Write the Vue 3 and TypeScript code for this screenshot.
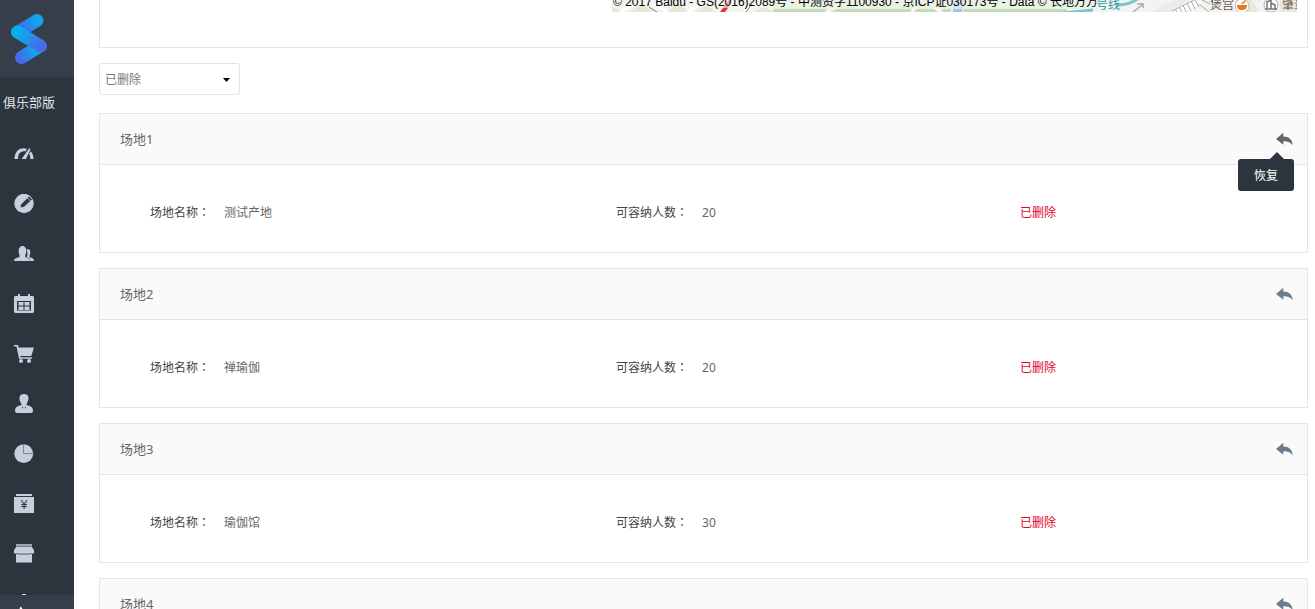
<script setup lang="ts">
import { ref } from 'vue'

interface Venue {
  id: number
  title: string
  name: string
  capacity: number
}

const status = ref('deleted')
const hovered = ref(1)

const venues: Venue[] = [
  { id: 1, title: '场地1', name: '测试产地', capacity: 20 },
  { id: 2, title: '场地2', name: '禅瑜伽', capacity: 20 },
  { id: 3, title: '场地3', name: '瑜伽馆', capacity: 30 },
  { id: 4, title: '场地4', name: '操房', capacity: 30 },
]
</script>

<template>
  <div class="app">
    <aside class="sidebar">
      <div class="logo">
        <svg width="38" height="52" viewBox="0 0 38 52" aria-hidden="true">
          <defs>
            <linearGradient id="bar-top" gradientUnits="userSpaceOnUse" x1="27" y1="7" x2="9" y2="18">
              <stop offset="0" stop-color="#12a4f0" />
              <stop offset="1" stop-color="#4568e6" />
            </linearGradient>
            <linearGradient id="bar-mid" gradientUnits="userSpaceOnUse" x1="5" y1="18" x2="32" y2="34">
              <stop offset="0.1" stop-color="#08aff0" />
              <stop offset="1" stop-color="#4a68e6" />
            </linearGradient>
            <linearGradient id="bar-low" gradientUnits="userSpaceOnUse" x1="25" y1="34" x2="9" y2="45">
              <stop offset="0" stop-color="#06b0f0" />
              <stop offset="1" stop-color="#4569e8" />
            </linearGradient>
          </defs>
          <g fill="none" stroke-width="13" stroke-linecap="round">
            <path d="M27 7.500 8 19" stroke="url(#bar-top)" />
            <path d="M30 33 11.500 44.500" stroke="url(#bar-low)" />
            <path d="M7.500 19 30.500 33" stroke="url(#bar-mid)" />
          </g>
        </svg>
      </div>
      <div class="edition">俱乐部版</div>
      <nav class="nav">
        <a href="#" aria-label="仪表盘">
          <svg viewBox="0 0 20 20">
            <path d="M.5 15C.5 9 4 4.300 9.500 4.300c1.300 0 2.500.2 3.500.7l-1.600 2.500C7 6.600 4 9.500 4 15z" />
            <path d="M15.300 4.300 16.600 5 12 15H7.500z" />
            <path d="m16.500 7.200c2 1.700 3 4.500 3 7.800h-3.200c0-2-.3-3.700-1.200-5.200z" />
          </svg>
        </a>
        <a href="#" aria-label="编辑">
          <svg viewBox="0 0 20 20">
            <circle cx="10" cy="9.500" r="9.700" />
            <path class="cut" d="M6.500 13.500 7.300 10.200 15 2.500 18 5.500 10 12.700z" />
            <path d="m13.500 4 3 3" class="hair" />
          </svg>
        </a>
        <a href="#" aria-label="会员">
          <svg viewBox="0 0 20 20">
            <path d="M0 17c0-2.400 2-3 5.500-4V11C3.800 8 4.500 2 8.500 2s4.700 6 2.800 9v2c3 1 4.700 1.500 4.700 4z" />
            <path d="M12.500 5.500c3.500-1.500 4.700 2 3 6.500v1.200c3 .7 4.500 1.300 4.500 3.800h-3.700c-.1-2.500-1.200-3.300-3.600-4.100 1-2.200 1.200-4.700-.2-7.400z" />
          </svg>
        </a>
        <a href="#" aria-label="课程表">
          <svg viewBox="0 0 20 20">
            <path fill-rule="evenodd" d="M1 2h3V0h2v2h8V0h2v2h3l1 1v15l-1 1H1l-1-1V3zM3 7v9.500h14V7z" />
            <path d="M4.500 8h5v3.500h-5zM10.500 8h5v3.500h-5zM4.500 12.500h5V16h-5zM10.500 12.500h5V16h-5z" />
          </svg>
        </a>
        <a href="#" aria-label="商城">
          <svg viewBox="0 0 20 20">
            <path d="M0 1h4l.7 2.500H20L17.300 12H6.200l.4 1.200H18v1.500H5L2.500 2.600H0z" />
            <circle cx="7" cy="17" r="2" /><circle cx="15" cy="17" r="2" />
          </svg>
        </a>
        <a href="#" aria-label="员工">
          <svg viewBox="0 0 20 20">
            <path d="M10 0c5 0 5.700 5 3 9l-.5 2c4 1 6.500 2.300 6.500 5.500 0 2-1 2.500-3 2.500H4c-2 0-3-.5-3-2.500C1 13.300 3.500 12 7.500 11L7 9C4.300 5 5 0 10 0z" />
            <path class="cut" d="M8 13h1v1.200H8zM11 13h1v1.200H11z" />
          </svg>
        </a>
        <a href="#" aria-label="统计">
          <svg viewBox="0 0 20 20">
            <circle cx="9.700" cy="9.700" r="9.400" />
            <path class="split" d="M9.500 0v9.500H20" />
          </svg>
        </a>
        <a href="#" aria-label="财务">
          <svg viewBox="0 0 20 20">
            <path d="M2 0h16v2H2zM0 3h20v16H0z" />
            <text x="10" y="15">¥</text>
          </svg>
        </a>
        <a href="#" aria-label="门店">
          <svg viewBox="0 0 20 20">
            <path d="M2 .2h16v1.600H2zM2.500 2.500h15L20 6v3.500h-2V18.500H2V9.500H0V6z" />
            <path class="scallop" d="M2 9.200q1 1.500 2.300.5 1.500 1.300 2.700 0 1.500 1.300 3 0 1.500 1.300 3 0 1.200 1.300 2.700 0 1.300 1 2.300-.5" />
          </svg>
        </a>
        <a href="#" aria-label="设置">
          <svg viewBox="0 0 20 20"><path d="M8 0h4l1 4H7zM3 4h14v12H3z" /></svg>
        </a>
      </nav>
      <div class="collapse">
        <svg width="10" height="6" viewBox="0 0 10 6"><path d="m3 3 2-2 1 2 2 3H2z" /></svg>
      </div>
    </aside>

    <main class="content">
      <section class="map-panel">
        <div class="map">
          <svg class="tiles" width="685" height="12" viewBox="0 0 685 12" aria-hidden="true">
            <path fill="#f3f3f0" d="M0 0h685v12H0z" />
            <path fill="#e7e7d2" d="M0 7 12 12H0zM16 12 30 5l12 7zM52 12l14-7 12 7zM84 12 95 5l8 7zM143 12l9-5 10 5z" />
            <path fill="none" stroke="#fff" stroke-width="3" d="m8 12 15-8M42 4l14 8M75 12l14-8M132 12l14-9" />
            <path fill="#e5322d" d="m108 12 3-4h5l-3 4z" />
            <path fill="#efa29f" d="m111 8 6-8h3l-4 8z" />
            <path fill="none" stroke="#777" d="m37 7 8 5M134 12l6-8" />
            <path fill="#eaf1e7" d="M161 0h180v9H161zM352 0h125v9H352z" />
            <path fill="#c1ddb8" d="M161 9h178v3H161zM351 9h104v3H351z" />
            <path fill="none" stroke="#f4f6f1" stroke-width="4" d="m214 12 12-6M300 12l5-8M322 7l8 5" />
            <path fill="#dbe4f1" d="M341 0h11v9h-11z" />
            <path fill="#a9c2e6" d="M341 9h9v3h-9z" />
            <path fill="none" stroke="#7cc5cd" stroke-width="3" d="m451 13 30-3M504 5c11 0 18-3 23-7" />
            <path fill="none" stroke="#aaa" stroke-width="1.500" d="m521 12 9-7M525 4h6v4" />
            <path fill="#ebebe9" d="m538 12 25-12h30l-20 12z" />
            <path fill="none" stroke="#fff" stroke-width="8" d="m563 13 26-14" />
            <path fill="none" stroke="#aaa" stroke-width="1" d="m560 11 22-11M563 9l2 3M567 7l3 5M571 5l3 7M575 3l4 8M579 1l4 8M583 0l4 7M587 4l10 8M590 0l8 4" />
            <path fill="#ebe9dd" d="M622 0h18l7 12h-20zM668 0h17v12h-17z" />
            <circle cx="630" cy="6" r="7" fill="#fff" stroke="#c9b8a8" />
            <path fill="#e27a20" d="M625 5h10c0 3-1 5-5 5s-5-2-5-5zM629 4l4-4 1 1-3 3z" />
            <circle cx="659" cy="5" r="7" fill="#fff" stroke="#aaa" />
            <path fill="none" stroke="#777" stroke-width="1.500" d="M655 9V2l4-2v9M659 3l4 2v4M653 9h12" />
          </svg>
          <span class="metro">号线</span>
          <span class="place palace">煲宫</span>
          <span class="place east">肇炎</span>
          <span class="copyright">© 2017 Baidu - GS(2016)2089号 - 中测资字1100930 - 京ICP证030173号 - Data © 长地万方</span>
        </div>
      </section>

      <div class="filter">
        <select v-model="status" aria-label="场地状态">
          <option value="deleted">已删除</option>
          <option value="active">使用中</option>
        </select>
        <svg class="caret" width="7" height="4" viewBox="0 0 7 4"><path d="M0 0h7L3.500 4z" /></svg>
      </div>

      <article v-for="venue in venues" :key="venue.id" class="card">
        <header class="card-head">
          <h2>{{ venue.title }}</h2>
          <div class="restore">
            <button
              type="button"
              aria-label="恢复"
              :class="{ active: hovered === venue.id }"
              @mouseenter="hovered = venue.id"
            >
              <svg width="17" height="14" viewBox="0 0 17 14">
                <path d="M0 7 7.300.8V4.500C13 4.500 16.300 7.500 16.800 13.500 14.700 10.200 12 9.200 7.300 9.300v3.500z" />
              </svg>
            </button>
            <div v-if="hovered === venue.id" class="tooltip" role="tooltip">恢复</div>
          </div>
        </header>
        <div class="card-body">
          <div class="field">
            <span class="label">场地名称<span class="colon">：</span></span>
            <span class="value">{{ venue.name }}</span>
          </div>
          <div class="field">
            <span class="label">可容纳人数<span class="colon">：</span></span>
            <span class="value">{{ venue.capacity }}</span>
          </div>
          <div class="state">已删除</div>
        </div>
      </article>
    </main>
  </div>
</template>

<style>
body {
  margin: 0;
  background: #fff;
}
</style>

<style scoped>
.app {
  display: flex;
  height: 100vh;
  overflow: hidden;
  font-family: "Noto Sans", "Noto Sans CJK SC", sans-serif;
  font-size: 12px;
  line-height: 20px;
  color: #666;
}
.sidebar {
  display: flex;
  flex-direction: column;
  flex: none;
  width: 74px;
  background: #2c343d;
}
.logo {
  flex: none;
  box-sizing: border-box;
  height: 77px;
  padding: 13px 10px 0;
  background: #363e49;
}
.edition {
  flex: none;
  padding: 0 0 2px 3px;
  font-size: 13px;
  line-height: 50px;
  color: #dde3ea;
}
.nav {
  flex: 1;
  min-height: 0;
  overflow: hidden;
}
.nav a {
  display: flex;
  align-items: center;
  height: 50px;
  padding-left: 14px;
}
.nav svg {
  width: 20px;
  height: 20px;
  fill: #c5d0dc;
}
.nav .cut {
  fill: #2c343d;
}
.nav .hair {
  stroke: #c5d0dc;
}
.nav .split {
  fill: none;
  stroke: #7c8791;
}
.nav .scallop {
  fill: none;
  stroke: #4c555f;
}
.nav text {
  fill: #2c343d;
  font-family: "Liberation Sans", sans-serif;
  font-size: 12px;
  text-anchor: middle;
}
.collapse {
  display: flex;
  flex: none;
  align-items: flex-end;
  height: 14px;
  padding-left: 16px;
  background: #363e49;
}
.collapse svg {
  height: 3px;
  fill: #fff;
}
.content {
  flex: 1;
  min-width: 0;
  padding: 0 7px 0 25px;
}
.map-panel {
  display: grid;
  grid-template-columns: 512fr 685fr;
  padding: 0 10px 35px 0;
  border: 1px solid #e5e5e5;
  border-top: 0;
}
.map {
  position: relative;
  grid-column: 2;
  height: 12px;
  overflow: hidden;
  background: #f3f3f0;
}
.tiles {
  display: block;
}
.map span {
  position: absolute;
  line-height: 14px;
  white-space: nowrap;
}
.map .copyright {
  top: -5px;
  left: 1px;
  font-family: "Liberation Sans", "Noto Sans CJK SC", sans-serif;
  color: #000;
}
.map .metro {
  top: -2px;
  left: 484px;
  color: #2a9aa5;
}
.map .place {
  top: -2px;
  color: #665a52;
}
.map .palace {
  left: 598px;
}
.map .east {
  left: 670px;
}
.filter {
  position: relative;
  width: 141px;
  margin: 15px 0 18px;
}
.filter select {
  display: block;
  box-sizing: border-box;
  width: 100%;
  height: 32px;
  padding: 2px 24px 0 5px;
  border: 1px solid #e5e5e5;
  border-radius: 3px;
  appearance: none;
  background: #fff;
  color: #777;
  font: inherit;
}
.caret {
  position: absolute;
  top: 15px;
  right: 10px;
  pointer-events: none;
}
.card {
  margin-bottom: 15px;
  border: 1px solid #e5e5e5;
}
.card-head {
  display: flex;
  align-items: center;
  justify-content: space-between;
  height: 50px;
  padding: 0 14px 0 20px;
  border-bottom: 1px solid #e5e5e5;
  background: #fafafa;
}
h2 {
  margin: 0;
  font-size: 13px;
  font-weight: 400;
}
.restore {
  position: relative;
}
button {
  display: block;
  padding: 0;
  border: 0;
  background: none;
  cursor: pointer;
}
button svg {
  display: block;
  fill: #6b7b90;
}
button.active svg {
  fill: #666;
}
.tooltip {
  position: absolute;
  top: 27px;
  right: -1px;
  box-sizing: border-box;
  width: 56px;
  padding-top: 2px;
  border-radius: 3px;
  background: #2c343d;
  color: #fff;
  line-height: 30px;
  text-align: center;
}
.tooltip::before {
  content: "";
  position: absolute;
  right: 10px;
  bottom: 100%;
  border: 7px solid transparent;
  border-top: 0;
  border-bottom-color: #2c343d;
}
.card-body {
  display: grid;
  grid-template-columns: 466fr 404fr 287fr;
  padding: 38px 0 29px 50px;
}
.field {
  display: flex;
  gap: 14px;
}
.label {
  color: #444;
}
.colon {
  font-family: "Noto Sans CJK TC", sans-serif;
  line-height: 0;
}
.state {
  color: #e4002b;
}
</style>
